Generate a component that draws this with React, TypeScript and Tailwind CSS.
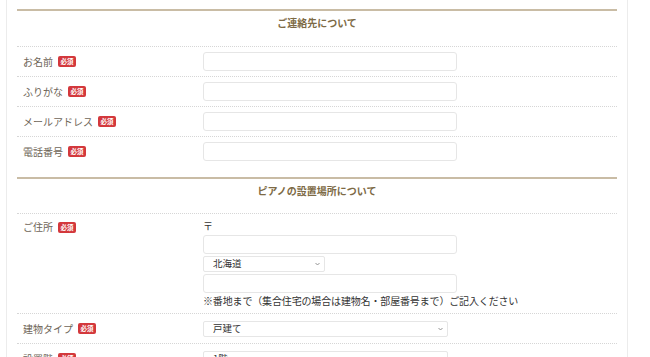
const font = { fontFamily: '"Noto Sans CJK JP", "Noto Sans", sans-serif' };

const Badge = () => (
  <span className="flex h-[11px] w-[18px] items-center justify-center rounded-[2px] bg-[#d3383c] text-[6.5px] font-bold leading-none text-white">
    必須
  </span>
);

const Label = ({ text }: { text: string }) => (
  <div className="flex items-center gap-[5px] text-[10px] leading-[14px] text-[#6e6558]">
    <span>{text}</span>
    <Badge />
  </div>
);

const TextInput = () => (
  <input
    type="text"
    className="block h-[19px] w-[254px] shrink-0 rounded-[3px] border border-[#e6e6e6] bg-white outline-none"
  />
);

const Chevron = () => (
  <svg
    className="pointer-events-none absolute right-[5px] top-1/2 -translate-y-1/2"
    width="5"
    height="4"
    viewBox="0 0 5 4"
  >
    <path d="M0.5 1 L2.5 3 L4.5 1" fill="none" stroke="#888" strokeWidth="0.9" />
  </svg>
);

const Select = ({ value, width }: { value: string; width: string }) => (
  <div className={`relative h-[16px] shrink-0 ${width}`}>
    <select
      defaultValue={value}
      className="block h-full w-full appearance-none rounded-[2px] border border-[#e6e6e6] bg-white pl-[9px] text-[9.5px] leading-none text-[#333] outline-none"
    >
      <option>{value}</option>
    </select>
    <Chevron />
  </div>
);

const Row = ({ label, children }: { label: string; children: React.ReactNode }) => (
  <div className="flex h-[30px] shrink-0 items-center border-t border-dotted border-[#d6d6d6]">
    <div className="w-[186px] pl-[6px]">
      <Label text={label} />
    </div>
    {children}
  </div>
);

const Heading = ({ text, height }: { text: string; height: string }) => (
  <div
    className={`${height} border-t-2 border-[#c9bca5] pt-[5px] text-center text-[10px] font-bold leading-[14px] text-[#7d6a45]`}
  >
    {text}
  </div>
);

export default function App() {
  return (
    <div className="h-[357px] w-[650px] overflow-hidden bg-white" style={font}>
      <div className="ml-[6px] flex h-full w-[622px] flex-col border-x border-[#ececec] px-[10px] pt-[9px]">
        <div className="mb-[11px] flex flex-col">
          <Heading text="ご連絡先について" height="h-[37px]" />
          <Row label="お名前">
            <TextInput />
          </Row>
          <Row label="ふりがな">
            <TextInput />
          </Row>
          <Row label="メールアドレス">
            <TextInput />
          </Row>
          <Row label="電話番号">
            <TextInput />
          </Row>
        </div>

        <div className="flex flex-col">
          <Heading text="ピアノの設置場所について" height="h-[36px]" />
          <div className="flex h-[100px] shrink-0 items-start border-t border-dotted border-[#d6d6d6] pt-[5px]">
            <div className="w-[186px] pl-[6px] pt-[1px]">
              <Label text="ご住所" />
            </div>
            <div className="flex flex-col gap-[2px] text-[10px] leading-[14px] text-[#333]">
              <span>〒</span>
              <TextInput />
              <Select value="北海道" width="w-[122px]" />
              <TextInput />
              <span className="-mt-[1px] tracking-[-0.15px]">
                ※番地まで（集合住宅の場合は建物名・部屋番号まで）ご記入ください
              </span>
            </div>
          </div>
          <Row label="建物タイプ">
            <Select value="戸建て" width="w-[245px]" />
          </Row>
          <Row label="設置階">
            <Select value="1階" width="w-[245px]" />
          </Row>
        </div>
      </div>
    </div>
  );
}
